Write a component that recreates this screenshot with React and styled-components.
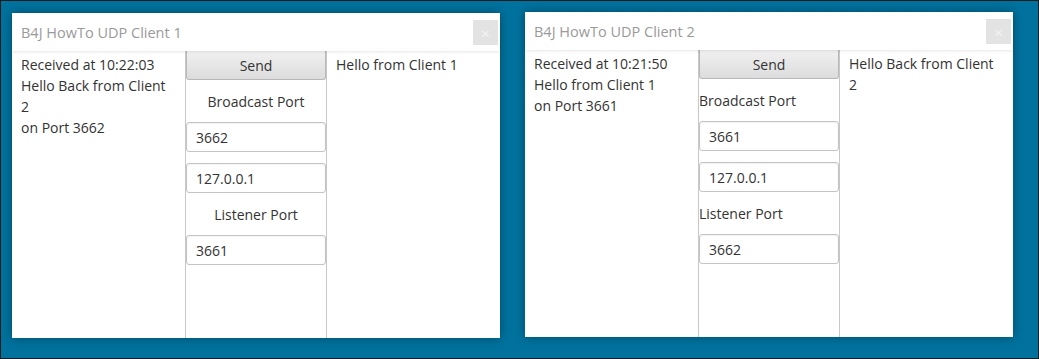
import { createGlobalStyle, styled } from "styled-components";

const GlobalStyle = createGlobalStyle`
  html, body {
    margin: 0;
    padding: 0;
  }
  body {
    font-family: "Open Sans", "Noto Sans", sans-serif;
  }
`;

const clients = [
  {
    title: "B4J HowTo UDP Client 1",
    received: ["Received at 10:22:03", "Hello Back from Client 2", "on Port 3662"],
    broadcast: "3662",
    host: "127.0.0.1",
    listener: "3661",
    sent: "Hello from Client 1",
    centered: true,
    offset: 0,
  },
  {
    title: "B4J HowTo UDP Client 2",
    received: ["Received at 10:21:50", "Hello from Client 1", "on Port 3661"],
    broadcast: "3661",
    host: "127.0.0.1",
    listener: "3662",
    sent: "Hello Back from Client 2",
    centered: false,
    offset: -1,
  },
];

const ClientWindow = ({ client }) => {
  return (
    <Window $offset={client.offset}>
      <TitleBar>
        <Title>{client.title}</Title>
        <CloseButton>×</CloseButton>
      </TitleBar>
      <Body>
        <TextPane>
          {client.received.map((line, index) => (
            <div key={index}>{line}</div>
          ))}
        </TextPane>
        <Controls>
          <SendButton>Send</SendButton>
          <Label $centered={client.centered}>Broadcast Port</Label>
          <Field defaultValue={client.broadcast} />
          <Field defaultValue={client.host} $gap />
          <Label $centered={client.centered}>Listener Port</Label>
          <Field defaultValue={client.listener} />
        </Controls>
        <TextPane>{client.sent}</TextPane>
      </Body>
    </Window>
  );
};

const App = () => {
  return (
    <>
      <GlobalStyle />
      <Desktop>
        {clients.map((client) => (
          <ClientWindow key={client.title} client={client} />
        ))}
      </Desktop>
    </>
  );
};

const Desktop = styled.div`
  box-sizing: border-box;
  width: 1039px;
  height: 359px;
  border: 1px solid #1c1c1c;
  background-color: #01729e;
  display: flex;
  align-items: flex-start;
  gap: 25px;
  padding: 12px 0 0 11px;
`;

const Window = styled.div`
  width: 488px;
  height: 325px;
  margin-top: ${(props) => props.$offset}px;
  background-color: white;
  display: flex;
  flex-direction: column;
  box-shadow: 0 0 10px rgba(0, 0, 0, 0.35);
`;

const TitleBar = styled.div`
  height: 38px;
  display: flex;
  align-items: center;
  justify-content: space-between;
  padding-left: 9px;
  padding-right: 2px;
  box-shadow: 0 1px 3px rgba(0, 0, 0, 0.1);
  position: relative;
  z-index: 1;
`;

const Title = styled.span`
  font-size: 14.5px;
  color: #9a9a9a;
`;

const CloseButton = styled.div`
  width: 25px;
  height: 25px;
  margin-top: 1px;
  background-color: #e3e3e3;
  color: #f4f4f4;
  font-size: 15px;
  display: flex;
  align-items: center;
  justify-content: center;
`;

const Body = styled.div`
  flex: 1;
  display: grid;
  grid-template-columns: 173px 140px 173px;
  column-gap: 1px;
  background-color: #c8c8c8;
`;

const TextPane = styled.div`
  background-color: white;
  padding: 3px 9px;
  font-size: 14px;
  line-height: 21px;
  color: #333333;
`;

const Controls = styled.div`
  background-color: white;
  display: flex;
  flex-direction: column;
`;

const SendButton = styled.button`
  height: 29px;
  margin: 0;
  border: 1px solid #b8b8b8;
  border-top: none;
  border-radius: 0 0 3px 3px;
  background: linear-gradient(#f1f1f1, #dcdcdc);
  font-family: inherit;
  font-size: 14px;
  color: #333333;
  padding: 0;
`;

const Label = styled.div`
  height: 42px;
  display: flex;
  align-items: center;
  justify-content: ${(props) => (props.$centered ? "center" : "flex-start")};
  font-size: 14px;
  color: #333333;
`;

const Field = styled.input`
  box-sizing: border-box;
  height: 30px;
  width: 140px;
  margin: ${(props) => (props.$gap ? "11px 0 0" : "0")};
  border: 1px solid #c4c4c4;
  border-radius: 3px;
  box-shadow: inset 0 1px 2px rgba(0, 0, 0, 0.06);
  padding: 0 9px;
  font-family: inherit;
  font-size: 14px;
  color: #333333;
  outline: none;
`;

export default App;
